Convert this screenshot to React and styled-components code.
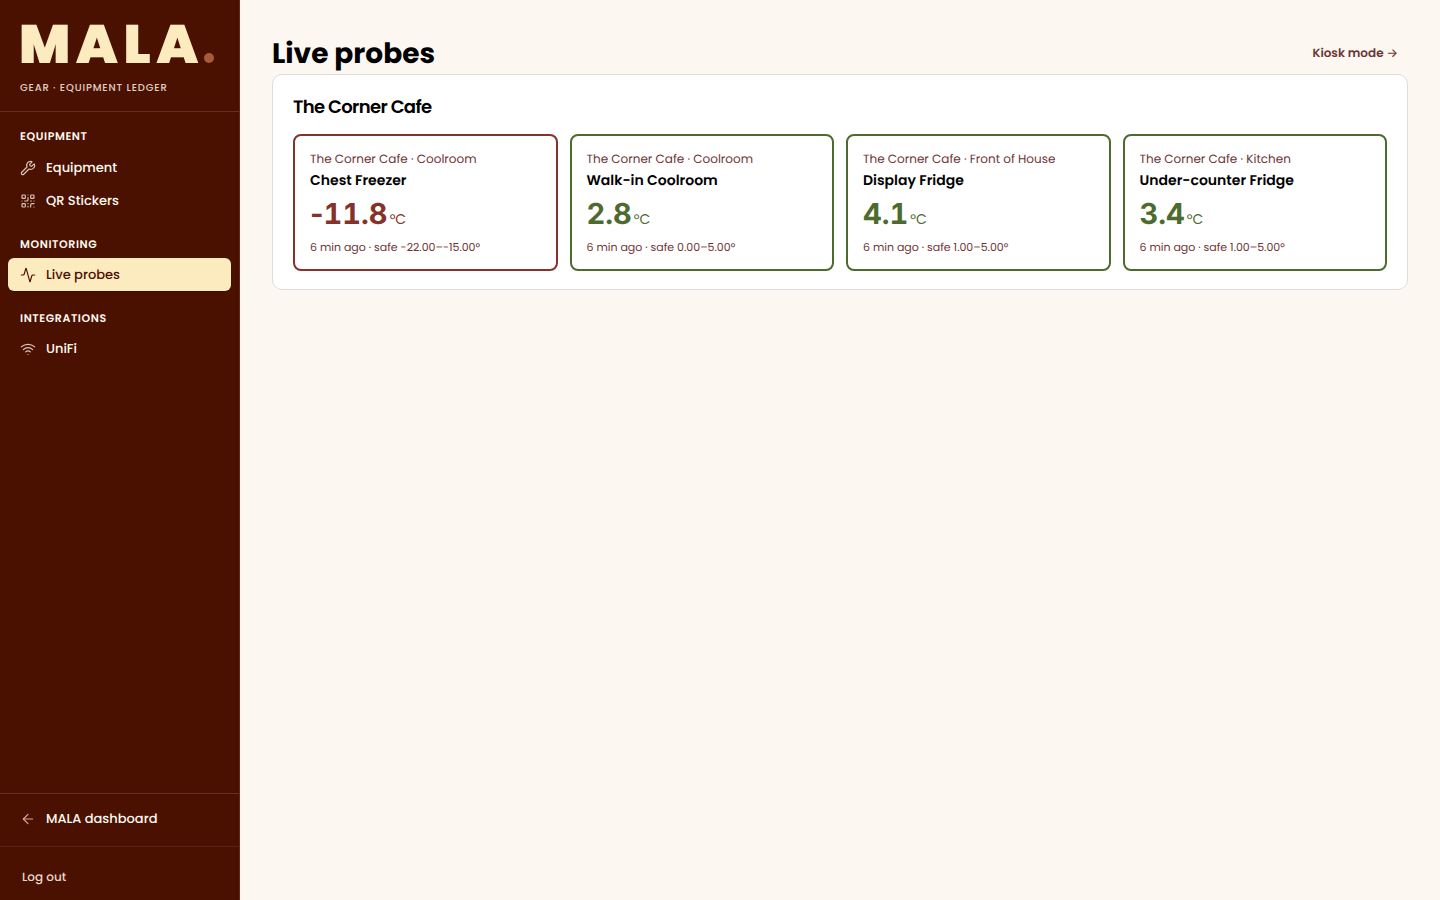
import React from 'react';
import styled, { createGlobalStyle } from 'styled-components';
import { Wrench, QrCode, Activity, Wifi, ArrowLeft } from 'lucide-react';

const Global = createGlobalStyle`
  * { box-sizing: border-box; }
  html, body { margin: 0; padding: 0; height: 100%; background: #fcf7f0; }
  body { font-family: Poppins, "Open Sans", "Noto Sans", sans-serif; text-rendering: geometricPrecision; }
`;
const Shell = styled.div`display: flex; height: 900px; overflow: hidden;`;
const Side = styled.aside`width: 240px; flex: none; background: #4b1100; border-right: 1px solid rgba(255,255,255,.1); display: flex; flex-direction: column; color: #fdf8f0;`;
const Brand = styled.div`height: 112px; padding: 12px 20px 0; border-bottom: 1px solid rgba(255,255,255,.13);`;
const Logo = styled.div`font-family: Poppins, sans-serif; font-weight: 900; font-size: 54px; line-height: 64px; letter-spacing: 5.7px; margin-left: -1px; color: #fdebc0; display:flex; align-items: baseline;`;
const Dot = styled.span`width: 10px; height: 10px; border-radius: 50%; background: #a85a3a; margin-left: 0;`;
const Tag = styled.div`font-size: 10px; letter-spacing: .85px; color: #e0cfc4; font-weight: 500; margin-top: 4px; line-height: 15px;`;
const Nav = styled.nav`flex: 1; padding: 16px 8px 0;`;
const GroupTitle = styled.div`font-size: 11px; font-weight: 600; letter-spacing: .6px; padding: 0 12px; height: 16px; line-height: 16px; margin-bottom: 6.5px;`;
const Group = styled.div`margin-bottom: 19px; &:first-child { margin-bottom: 18.5px; ${GroupTitle} { margin-bottom: 7px; } }`;
const Item = styled.div`display: flex; align-items: center; gap: 10px; height: 33px; padding: 0 12px; border-radius: 6px; font-size: 13px; font-weight: 500; background: ${p => p.$active ? '#fdebc0' : 'transparent'}; box-shadow: ${p => p.$active ? '0 1px 2px rgba(0,0,0,.25)' : 'none'}; color: ${p => p.$active ? '#4b1100' : '#fdf8f0'}; svg { color: ${p => p.$active ? '#4b1100' : '#d9c5b8'}; }`;
const Back = styled.div`height: 54px; padding-bottom: 2px; border-top: 1px solid rgba(255,255,255,.13); border-bottom: 1px solid rgba(255,255,255,.08); padding-left: 20px; display: flex; align-items: center; gap: 10px; font-size: 13px; font-weight: 500; svg { color: #d9a898; }`;
const Logout = styled.div`height: 53px; padding: 9px 22px 0; display: flex; align-items: center; font-size: 12px; font-weight: 500; color: #e8d8cc;`;
const Main = styled.main`flex: 1; padding: 32px 32px 0;`;
const Head = styled.div`display: flex; justify-content: space-between; align-items: center; height: 42px;`;
const Title = styled.h1`margin: 2px 0 0; font-size: 28px; font-weight: 700; color: #000;`;
const Kiosk = styled.span`font-size: 12px; font-weight: 600; color: #6e3535; padding: 2px 10px 0 0; display: flex; align-items: center; gap: 3px;`;
const KioskArrow = styled.span`font-family: "Inter", sans-serif; font-weight: 500; font-size: 12px; margin-bottom: 3px;`;
const Panel = styled.section`background: #fff; border: 1px solid #e0dcd8; border-radius: 10px; padding: 21px 20px 18px;`;
const PanelTitle = styled.h2`margin: 0 0 14px; font-size: 18px; font-weight: 600; line-height: 24px; letter-spacing: -.65px; color: #000;`;
const Cards = styled.div`display: grid; grid-template-columns: repeat(4, 1fr); gap: 12px;`;
const Card = styled.div`border: 2px solid ${p => p.$c}; border-radius: 8px; padding: 15px 15px 14px; height: 137px;`;
const Loc = styled.div`font-size: 12px; color: #6e3535; line-height: 18px;`;
const Name = styled.div`font-size: 14px; font-weight: 600; line-height: 22px; color: #000;`;
const Temp = styled.div`font-family: Inter, sans-serif; font-weight: 700; font-size: 29px; line-height: 40px; margin-top: 3px; color: ${p => p.$c}; display: flex; align-items: baseline; gap: 2px;`;
const Digits = styled.span`font-feature-settings: "tnum";`;
const Unit = styled.span`font-family: Poppins, "Open Sans", sans-serif; font-size: 14px; font-weight: 400;`;
const Meta = styled.div`font-size: 11px; color: #6e3535;`;

const red = '#85332a', green = '#4d6b2e';
const probes = [
  ['The Corner Cafe · Coolroom', 'Chest Freezer', '-', '11.8', 'safe -22.00–-15.00°', red],
  ['The Corner Cafe · Coolroom', 'Walk-in Coolroom', '', '2.8', 'safe 0.00–5.00°', green],
  ['The Corner Cafe · Front of House', 'Display Fridge', '', '4.1', 'safe 1.00–5.00°', green],
  ['The Corner Cafe · Kitchen', 'Under-counter Fridge', '', '3.4', 'safe 1.00–5.00°', green],
];

export default function App() {
  return (
    <Shell>
      <Global />
      <Side>
        <Brand>
          <Logo>MALA<Dot /></Logo>
          <Tag>GEAR · EQUIPMENT LEDGER</Tag>
        </Brand>
        <Nav>
          <Group>
            <GroupTitle>EQUIPMENT</GroupTitle>
            <Item><Wrench size={16} strokeWidth={1.75} />Equipment</Item>
            <Item><QrCode size={16} strokeWidth={1.75} />QR Stickers</Item>
          </Group>
          <Group>
            <GroupTitle>MONITORING</GroupTitle>
            <Item $active><Activity size={16} strokeWidth={1.75} />Live probes</Item>
          </Group>
          <Group>
            <GroupTitle>INTEGRATIONS</GroupTitle>
            <Item><Wifi size={16} strokeWidth={1.75} />UniFi</Item>
          </Group>
        </Nav>
        <Back><ArrowLeft size={16} strokeWidth={1.75} />MALA dashboard</Back>
        <Logout>Log out</Logout>
      </Side>
      <Main>
        <Head><Title>Live probes</Title><Kiosk>Kiosk mode <KioskArrow>→</KioskArrow></Kiosk></Head>
        <Panel>
          <PanelTitle>The Corner Cafe</PanelTitle>
          <Cards>
            {probes.map(p => (
              <Card key={p[1]} $c={p[5]}>
                <Loc>{p[0]}</Loc>
                <Name>{p[1]}</Name>
                <Temp $c={p[5]}>
                  <span>{p[2]}<Digits>{p[3]}</Digits></span>
                  <Unit>°C</Unit>
                </Temp>
                <Meta>6 min ago · {p[4]}</Meta>
              </Card>
            ))}
          </Cards>
        </Panel>
      </Main>
    </Shell>
  );
}
